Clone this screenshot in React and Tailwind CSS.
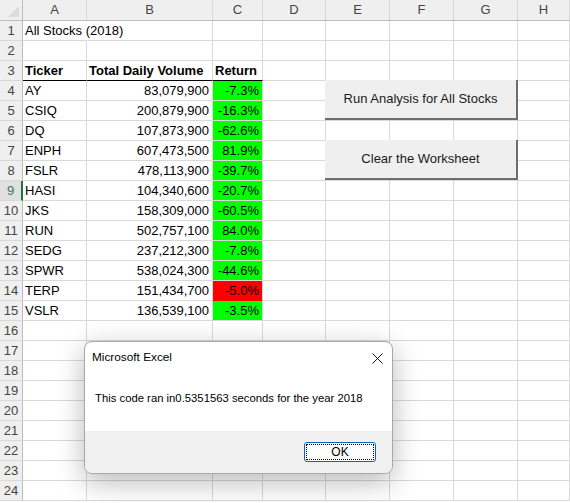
import React from 'react';

const COLS = ['A', 'B', 'C', 'D', 'E', 'F', 'G', 'H'];
const WIDTHS = ['w-[64px]', 'w-[126px]', 'w-[50px]', 'w-[63px]', 'w-[64px]', 'w-[64px]', 'w-[64px]', 'flex-1'];

const STOCKS = [
  ['AY', '83,079,900', '-7.3%', 'g'],
  ['CSIQ', '200,879,900', '-16.3%', 'g'],
  ['DQ', '107,873,900', '-62.6%', 'g'],
  ['ENPH', '607,473,500', '81.9%', 'g'],
  ['FSLR', '478,113,900', '-39.7%', 'g'],
  ['HASI', '104,340,600', '-20.7%', 'g'],
  ['JKS', '158,309,000', '-60.5%', 'g'],
  ['RUN', '502,757,100', '84.0%', 'g'],
  ['SEDG', '237,212,300', '-7.8%', 'g'],
  ['SPWR', '538,024,300', '-44.6%', 'g'],
  ['TERP', '151,434,700', '-5.0%', 'r'],
  ['VSLR', '136,539,100', '-3.5%', 'g'],
];

function buildRows() {
  const rows = [];
  for (let r = 1; r <= 24; r++) {
    const cells = Array(8).fill(null);
    if (r === 1) cells[0] = { text: 'All Stocks (2018)', overflow: true };
    if (r === 3) {
      cells[0] = { text: 'Ticker', bold: true, under: true };
      cells[1] = { text: 'Total Daily Volume', bold: true, under: true };
      cells[2] = { text: 'Return', bold: true, under: true };
    }
    const s = STOCKS[r - 4];
    if (s) {
      cells[0] = { text: s[0] };
      cells[1] = { text: s[1], right: true };
      cells[2] = { text: s[2], right: true, fill: s[3] };
    }
    rows.push(cells);
  }
  return rows;
}

function Cell({ cell, width, idx }) {
  let cls = `${width} h-full shrink-0 flex items-center border-r border-b border-[#d9d9d9] px-[2px] whitespace-nowrap`;
  if (cell?.fill === 'g') cls += ' bg-[#00ff00] border-[#00ff00] border-r-[#d9d9d9]';
  if (cell?.fill === 'r') cls += ' bg-[#ff0000] border-[#ff0000] border-r-[#d9d9d9]';
  if (cell?.under) cls += ' border-b-black';
  if (cell?.overflow) cls += ' border-r-transparent overflow-visible';
  if (cell?.right) cls += ' justify-end pr-[3px]';
  return (
    <div className={cls}>
      {cell && <span className={cell.bold ? 'font-bold' : ''}>{cell.text}</span>}
    </div>
  );
}

function SheetButton({ label, className }) {
  return (
    <div
      className={`absolute left-[325px] w-[193px] h-[40px] bg-[#efefef] border-r-2 border-b-2 border-[#6e6e6e] flex items-center justify-center text-[13px] text-[#1a1a1a] ${className}`}
    >
      {label}
    </div>
  );
}

export default function App() {
  const rows = buildRows();
  return (
    <div className="relative w-[570px] h-[503px] overflow-hidden bg-white text-[13px] text-black font-['Liberation_Sans',Arial,sans-serif]">
      {/* column headers */}
      <div className="flex h-[21px] bg-[#efefef] border-b border-[#bdbdbd] text-[#444]">
        <div className="w-[23px] shrink-0 relative border-r border-[#bdbdbd]">
          <svg className="absolute right-[3px] bottom-[3px]" width="11" height="11" viewBox="0 0 11 11">
            <polygon points="11,0 11,11 0,11" fill="#dbdbdb" />
          </svg>
        </div>
        {COLS.map((c, i) => (
          <div key={c} className={`${WIDTHS[i]} shrink-0 flex items-center justify-center border-r border-[#d9d9d9]`}>
            {c}
          </div>
        ))}
      </div>

      {rows.map((cells, ri) => {
        const n = ri + 1;
        const sel = n === 9;
        return (
          <div key={n} className="flex h-[20px]">
            <div
              className={`w-[23px] shrink-0 flex items-center justify-center border-b border-[#d9d9d9] ${
                sel ? 'bg-[#e0e0e0] text-[#3f7a57] border-r-2 border-r-[#217346]' : 'bg-[#efefef] text-[#444] border-r border-r-[#bdbdbd]'
              }`}
            >
              {n}
            </div>
            {cells.map((cell, ci) => (
              <Cell key={ci} cell={cell} width={WIDTHS[ci]} idx={ci} />
            ))}
          </div>
        );
      })}

      <SheetButton label="Run Analysis for All Stocks" className="top-[80px]" />
      <SheetButton label="Clear the Worksheet" className="top-[140px]" />

      {/* message box */}
      <div className="absolute left-[84px] top-[341px] w-[309px] h-[133px] rounded-[8px] border border-[#a8a8a8] bg-white overflow-hidden shadow-[0_8px_28px_rgba(0,0,0,0.28)] flex flex-col text-black">
        <div className="h-[30px] flex items-center justify-between pl-[7px] pr-[9px] pt-[2px]">
          <span className="text-[11.8px]">Microsoft Excel</span>
          <svg width="11" height="11" viewBox="0 0 11 11" className="mt-[0px]">
            <path d="M0.5 0.5 L10.5 10.5 M10.5 0.5 L0.5 10.5" stroke="#1a1a1a" strokeWidth="1" />
          </svg>
        </div>
        <div className="flex-1 flex items-center pl-[10px] pb-[6px] text-[11.3px]">
          This code ran in0.5351563 seconds for the year 2018
        </div>
        <div className="h-[42px] bg-[#f0f0f0] flex items-center justify-end pr-[16px]">
          <div className="w-[72px] h-[20px] rounded-[3px] border border-[#0067c0] bg-[#fdfdfd] p-[1px]">
            <div className="w-full h-full border border-dotted border-black flex items-center justify-center text-[12px]">
              OK
            </div>
          </div>
        </div>
      </div>
    </div>
  );
}
